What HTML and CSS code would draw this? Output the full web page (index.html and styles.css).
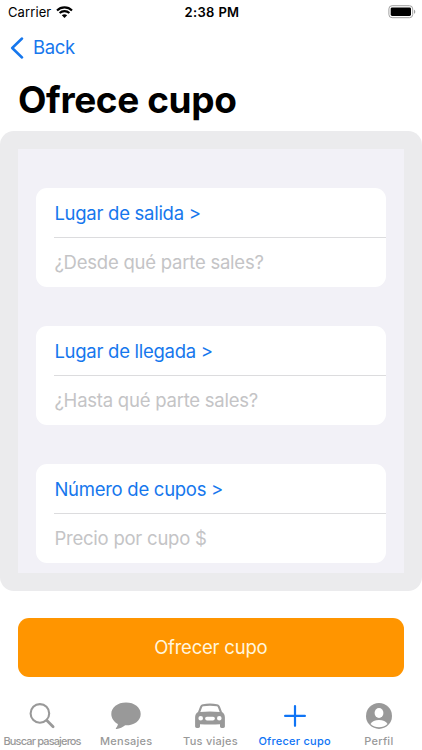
FILE: index.html
```html
<!DOCTYPE html>
<html lang="es">
<head>
<meta charset="utf-8">
<title>Ofrece cupo</title>
<link rel="stylesheet" href="styles.css">
</head>
<body>
<div class="screen">
  <header class="status">
    <div class="carrier"><span>Carrier</span>
      <svg class="wifi" width="17" height="12" viewBox="0 0 17 12"><g fill="none" stroke="#000" stroke-width="2.1"><path d="M1 4.4C5.1.3 11.900.3 16 4.400"/><path d="M3.600 7.100c2.800-2.700 7-2.700 9.800 0"/></g><path d="M5.800 9.200c1.500-1.400 3.900-1.400 5.400 0L8.500 11.900z"/></svg>
    </div>
    <span class="time">2:38 PM</span>
    <svg class="battery" width="28" height="14" viewBox="0 0 28 14"><rect x=".9" y=".7" width="23.8" height="12" rx="3.2" fill="none" stroke="#a0a0a0"/><rect x="2.7" y="2.4" width="20.3" height="8.6" rx="1.4"/><path d="M26 4.700c1.700.5 1.700 3.500 0 4z" fill="#a0a0a0"/></svg>
  </header>
  <nav class="nav">
    <svg width="14" height="22" viewBox="0 0 14 22"><path d="M12 1.500 2.200 11l9.800 9.500" fill="none" stroke="#1677ed" stroke-width="2.500" stroke-linecap="round" stroke-linejoin="round"/></svg>
    <span class="back">Back</span>
  </nav>
  <h1 class="title">Ofrece cupo</h1>
  <main class="panel">
    <div class="form">
      <section class="card">
        <div class="row link">Lugar de salida &gt;</div>
        <div class="row hint">¿Desde qué parte sales?</div>
      </section>
      <section class="card">
        <div class="row link">Lugar de llegada &gt;</div>
        <div class="row hint">¿Hasta qué parte sales?</div>
      </section>
      <section class="card">
        <div class="row link">Número de cupos &gt;</div>
        <div class="row hint">Precio por cupo $</div>
      </section>
    </div>
  </main>
  <button class="submit">Ofrecer cupo</button>
  <footer class="tabs">
    <div class="tab">
      <svg width="32" height="32" viewBox="0 0 32 32"><g fill="none" stroke="currentColor" stroke-linecap="round"><circle cx="13.900" cy="13.400" r="9.300" stroke-width="2.100"/><path d="m20.900 20.500 6.200 6.200" stroke-width="2.800"/></g></svg>
      <span class="label tight">Buscar pasajeros</span>
    </div>
    <div class="tab">
      <svg width="32" height="32" viewBox="0 0 32 32"><path fill="currentColor" d="M16 2.400c8.400 0 14.700 4.900 14.700 11.500S24.400 25.300 16 25.300h-.8c-2.300 1.900-5.600 3.500-8.500 3.800-.9.100-1.200-.6-.5-1.400.9-1 1.600-2.200 1.700-3.700C4 21.800 1.300 18.300 1.300 13.900 1.300 7.300 7.600 2.400 16 2.400z"/></svg>
      <span class="label">Mensajes</span>
    </div>
    <div class="tab">
      <svg width="32" height="32" viewBox="0 0 32 32"><path fill="currentColor" fill-rule="evenodd" d="M9 4.200c4-.8 10-.8 14 0 1.500.3 2.400 1.100 2.900 2.400l2.100 5.500c2 1.400 2.900 3.100 2.900 5.400v8.700c0 1-.7 1.700-1.700 1.700h-1.500c-1 0-1.700-.7-1.700-1.700v-2c-6 .5-14 .5-20 0v2c0 1-.7 1.700-1.700 1.700H2.800c-1 0-1.700-.7-1.700-1.700v-8.700c0-2.300.9-4 2.900-5.400l2.100-5.500C6.600 5.300 7.500 4.500 9 4.200zM9.200 6.300c-.6.100-.9.500-1.100 1L6.300 12c6-.8 13.400-.8 19.400 0l-1.800-4.700c-.2-.5-.5-.9-1.100-1-4.100-.7-9.500-.7-13.600 0zM6.700 16a2.300 2.300 0 1 0 0 4.600 2.300 2.300 0 0 0 0-4.600zm18.600 0a2.300 2.300 0 1 0 0 4.600 2.300 2.300 0 0 0 0-4.600zM12.900 16.800a1.800 1.800 0 0 0 0 3.600h6.200a1.800 1.800 0 0 0 0-3.600z"/></svg>
      <span class="label">Tus viajes</span>
    </div>
    <div class="tab active">
      <svg width="32" height="32" viewBox="0 0 32 32"><path d="M16 6v19.800M6.100 15.900h19.800" stroke="currentColor" stroke-width="2.200" stroke-linecap="round"/></svg>
      <span class="label">Ofrecer cupo</span>
    </div>
    <div class="tab">
      <svg width="32" height="32" viewBox="0 0 32 32"><circle cx="16" cy="15.900" r="13" fill="currentColor"/><ellipse cx="16" cy="13" rx="4.400" ry="5" fill="#fff"/><path d="M7.500 24c1.300-2.700 4.700-4 8.500-4s7.200 1.300 8.500 4c-2.300 2.200-5.300 3.200-8.500 3.200s-6.200-1-8.500-3.200z" fill="#fff"/></svg>
      <span class="label">Perfil</span>
    </div>
  </footer>
</div>
</body>
</html>
```
FILE: styles.css
```css
* { box-sizing: border-box; }
body {
  margin: 0;
  background: #fff;
  color: #000;
  font-family: Inter, "Liberation Sans", sans-serif;
}
.screen {
  width: 422px;
  height: 750px;
  display: flex;
  flex-direction: column;
  overflow: hidden;
}
.status {
  height: 24px;
  flex: none;
  display: grid;
  grid-template-columns: 1fr auto 1fr;
  align-items: center;
  padding: 0 6px 0 8px;
  font-size: 13px;
  line-height: 16px;
}
.carrier { display: flex; align-items: center; gap: 5px; letter-spacing: 0.1px; }
.time { font-weight: 600; letter-spacing: 0.35px; }
.battery { justify-self: end; }
.nav {
  height: 47px;
  flex: none;
  display: flex;
  align-items: center;
  gap: 9px;
  padding-left: 10px;
  color: #1677ed;
  font-size: 18.5px;
  letter-spacing: -0.35px;
}
.back { padding-bottom: 2px; }
.title {
  height: 59.5px;
  flex: none;
  margin: 0;
  padding: 5px 0 0 18px;
  font-size: 37px;
  line-height: 48px;
  font-weight: 700;
  letter-spacing: -0.4px;
  white-space: nowrap;
}
.panel {
  height: 460px;
  flex: none;
  padding: 18.5px 18.5px 18px 18px;
  border-radius: 14px;
  background: #ebebed;
}
.form {
  height: 100%;
  padding: 39px 18px 0;
  display: flex;
  flex-direction: column;
  gap: 39.5px;
  background: #f2f1f7;
}
.card {
  height: 98.5px;
  flex: none;
  padding-left: 18.4px;
  border-radius: 11px;
  background: #fff;
}
.row {
  height: 49px;
  display: flex;
  align-items: center;
  padding-top: 1px;
  font-size: 18.5px;
  letter-spacing: -0.27px;
  white-space: nowrap;
}
.link { height: 49.5px; color: #1677ed; border-bottom: 1px solid #dcdcde; }
.hint { padding: 0 0 1px; letter-spacing: -0.23px; color: #c4c4c6; }
.submit {
  height: 59px;
  flex: none;
  margin: 27px 18.5px 0 18px;
  padding: 0;
  border: 0;
  border-radius: 11px;
  background: #ff9500;
  color: #fff5de;
  font: inherit;
  font-size: 18.5px;
  letter-spacing: -0.22px;
}
.tabs {
  flex: 1;
  display: grid;
  grid-template-columns: repeat(5, 84.2px);
  padding-top: 23.5px;
}
.tab {
  display: flex;
  flex-direction: column;
  align-items: center;
  gap: 1.5px;
  color: #999;
}
.tab svg { flex: none; }
.active { color: #0f74f5; }
.label {
  font-size: 11px;
  line-height: 14px;
  font-weight: 500;
  white-space: nowrap;
  letter-spacing: 0.25px;
}
.tight { letter-spacing: -0.85px; }
```
